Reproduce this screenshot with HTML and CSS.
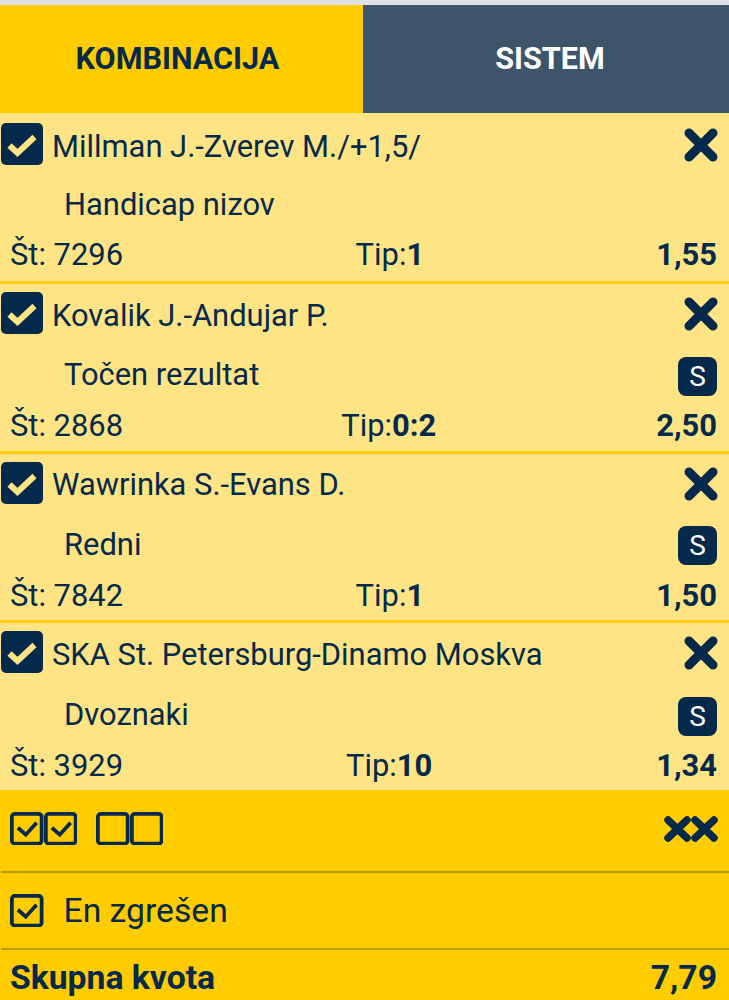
FILE: index.html
```html
<!DOCTYPE html>
<html lang="sl">

<head>
    <meta charset="UTF-8">
    <meta name="viewport" content="width=device-width, initial-scale=1.0">
    <title>Listek</title>
    <link rel="stylesheet" href="styles.css">
</head>

<body>
    <div class="tabs">
        <div class="tab active">KOMBINACIJA</div>
        <div class="tab">SISTEM</div>
    </div>

    <!-- Stave -->
    <div class="bet first">
        <div class="bet-head">
            <svg class="check-full" viewBox="0 0 42 42"><rect width="42" height="42" rx="5" fill="#05294b"/><path d="M8.500 22.500L16.500 30L33.500 14" fill="none" stroke="#ffe485" stroke-width="6"/></svg>
            <span class="bet-name">Millman J.-Zverev M./+1,5/</span>
            <svg class="remove" viewBox="0 0 34 34"><path d="M5 5l24 24M29 5L5 29" stroke="#05294b" stroke-width="9" stroke-linecap="round"/></svg>
        </div>
        <div class="bet-type"><span>Handicap nizov</span></div>
        <div class="bet-info">
            <span class="num">Št: 7296</span>
            <span class="tip">Tip:<b>1</b></span>
            <b class="odd">1,55</b>
        </div>
    </div>

    <div class="bet">
        <div class="bet-head">
            <svg class="check-full" viewBox="0 0 42 42"><rect width="42" height="42" rx="5" fill="#05294b"/><path d="M8.500 22.500L16.500 30L33.500 14" fill="none" stroke="#ffe485" stroke-width="6"/></svg>
            <span class="bet-name">Kovalik J.-Andujar P.</span>
            <svg class="remove" viewBox="0 0 34 34"><path d="M5 5l24 24M29 5L5 29" stroke="#05294b" stroke-width="9" stroke-linecap="round"/></svg>
        </div>
        <div class="bet-type"><span>Točen rezultat</span><span class="badge">S</span></div>
        <div class="bet-info">
            <span class="num">Št: 2868</span>
            <span class="tip">Tip:<b>0:2</b></span>
            <b class="odd">2,50</b>
        </div>
    </div>

    <div class="bet">
        <div class="bet-head">
            <svg class="check-full" viewBox="0 0 42 42"><rect width="42" height="42" rx="5" fill="#05294b"/><path d="M8.500 22.500L16.500 30L33.500 14" fill="none" stroke="#ffe485" stroke-width="6"/></svg>
            <span class="bet-name">Wawrinka S.-Evans D.</span>
            <svg class="remove" viewBox="0 0 34 34"><path d="M5 5l24 24M29 5L5 29" stroke="#05294b" stroke-width="9" stroke-linecap="round"/></svg>
        </div>
        <div class="bet-type"><span>Redni</span><span class="badge">S</span></div>
        <div class="bet-info">
            <span class="num">Št: 7842</span>
            <span class="tip">Tip:<b>1</b></span>
            <b class="odd">1,50</b>
        </div>
    </div>

    <div class="bet last">
        <div class="bet-head">
            <svg class="check-full" viewBox="0 0 42 42"><rect width="42" height="42" rx="5" fill="#05294b"/><path d="M8.500 22.500L16.500 30L33.500 14" fill="none" stroke="#ffe485" stroke-width="6"/></svg>
            <span class="bet-name">SKA St. Petersburg-Dinamo Moskva</span>
            <svg class="remove" viewBox="0 0 34 34"><path d="M5 5l24 24M29 5L5 29" stroke="#05294b" stroke-width="9" stroke-linecap="round"/></svg>
        </div>
        <div class="bet-type"><span>Dvoznaki</span><span class="badge">S</span></div>
        <div class="bet-info">
            <span class="num">Št: 3929</span>
            <span class="tip">Tip:<b>10</b></span>
            <b class="odd">1,34</b>
        </div>
    </div>

    <!-- Spodnji del -->
    <div class="footer">
        <div class="tools">
            <div class="tool-group">
                <svg class="box" viewBox="0 0 34 34"><rect x="1.900" y="1.900" width="30.200" height="30.200" rx="3" fill="none" stroke="#05294b" stroke-width="3.800"/><path d="M8 16l8 7L27 11" fill="none" stroke="#05294b" stroke-width="3.800"/></svg>
                <svg class="box" viewBox="0 0 34 34"><rect x="1.900" y="1.900" width="30.200" height="30.200" rx="3" fill="none" stroke="#05294b" stroke-width="3.800"/><path d="M8 16l8 7L27 11" fill="none" stroke="#05294b" stroke-width="3.800"/></svg>
            </div>
            <div class="tool-group">
                <svg class="box" viewBox="0 0 34 34"><rect x="1.900" y="1.900" width="30.200" height="30.200" rx="3" fill="none" stroke="#05294b" stroke-width="3.800"/></svg>
                <svg class="box" viewBox="0 0 34 34"><rect x="1.900" y="1.900" width="30.200" height="30.200" rx="3" fill="none" stroke="#05294b" stroke-width="3.800"/></svg>
            </div>
            <svg class="remove-all" viewBox="0 0 54 26"><path d="M4 4l19 18M23 4L4 22M31 4l19 18M50 4L31 22" stroke="#05294b" stroke-width="7.500" stroke-linecap="round"/></svg>
        </div>
        <div class="miss">
            <svg class="box" viewBox="0 0 34 34"><rect x="1.900" y="1.900" width="30.200" height="30.200" rx="3" fill="none" stroke="#05294b" stroke-width="3.800"/><path d="M8 16l8 7L27 11" fill="none" stroke="#05294b" stroke-width="3.800"/></svg>
            <span>En zgrešen</span>
        </div>
        <div class="total">
            <b>Skupna kvota</b>
            <b>7,79</b>
        </div>
    </div>
</body>

</html>
```

FILE: styles.css
```css
html,
body {
    height: 1000px;
    overflow: hidden;
}

body {
    margin: 0;
    font-family: Roboto, sans-serif;
    font-size: 30.900px;
    color: #05294b;
    background-color: #ffcc00;
    border-top: 5px solid #dee2e6;
    box-sizing: border-box;
}

.tabs {
    display: flex;
    height: 107.500px;
}

.tab {
    display: flex;
    justify-content: center;
    align-items: center;
    flex: 1;
    padding-left: 8px;
    font-size: 30.600px;
    font-weight: 700;
    color: white;
    background-color: #3c556b;
}

.tab.active {
    flex: none;
    width: 363px;
    padding: 0 8px 0 0;
    box-sizing: border-box;
    color: #05294b;
    background-color: #ffcc00;
}

.bet {
    height: 169.500px;
    box-sizing: border-box;
    background-color: #ffe485;
    border-bottom: 3px solid #ffcc00;
}

/* prva vrstica je malo visja */
.bet.first {
    height: 171.500px;
    padding-top: 2.500px;
}

.bet.last {
    height: 167px;
    border-bottom: none;
}

.bet-head {
    display: flex;
    align-items: center;
    height: 58px;
    padding: 0 11px 0 0;
}

.check-full {
    width: 42px;
    height: 42px;
    margin-left: 1px;
    flex: none;
}

.bet-name {
    flex: 1;
    margin-left: 9px;
    padding-top: 4px;
}

.remove {
    width: 34px;
    height: 34px;
    margin-top: 2px;
    flex: none;
}

.bet-type {
    display: flex;
    justify-content: space-between;
    align-items: center;
    height: 65px;
    padding: 0 12px 0 64px;
}

.bet.first .bet-type {
    height: 63px;
}

.bet.last .bet-type {
    margin-top: 1px;
}

.badge {
    display: flex;
    justify-content: center;
    align-items: center;
    width: 39px;
    height: 39px;
    margin-top: 3px;
    border-radius: 8px;
    font-size: 28px;
    color: white;
    background-color: #05294b;
}

.bet-info {
    display: grid;
    grid-template-columns: 1.18fr auto 1fr;
    align-items: center;
    height: 34px;
    padding: 0 12px 0 10px;
}

.tip {
    text-align: center;
}

.odd {
    text-align: right;
}

b {
    font-weight: 700;
}

.footer {
    display: flex;
    flex-direction: column;
}

.box {
    width: 33.500px;
    height: 33.500px;
    flex: none;
}

.tools {
    display: flex;
    align-items: center;
    gap: 19px;
    height: 83px;
    margin-left: 1px;
    padding: 0 11px 4px 9px;
    box-sizing: border-box;
    border-bottom: 2px solid #b89a10;
}

.tool-group {
    display: flex;
}

.remove-all {
    width: 54px;
    height: 26px;
    margin-left: auto;
}

.miss {
    display: flex;
    align-items: center;
    gap: 20px;
    height: 77px;
    padding-left: 9px;
    margin-left: 1px;
    box-sizing: border-box;
    border-bottom: 2px solid #b89a10;
    font-size: 33.700px;
}

.total {
    display: flex;
    justify-content: space-between;
    align-items: center;
    height: 54px;
    padding: 0 12px 0 10px;
    font-size: 33.700px;
}
```
